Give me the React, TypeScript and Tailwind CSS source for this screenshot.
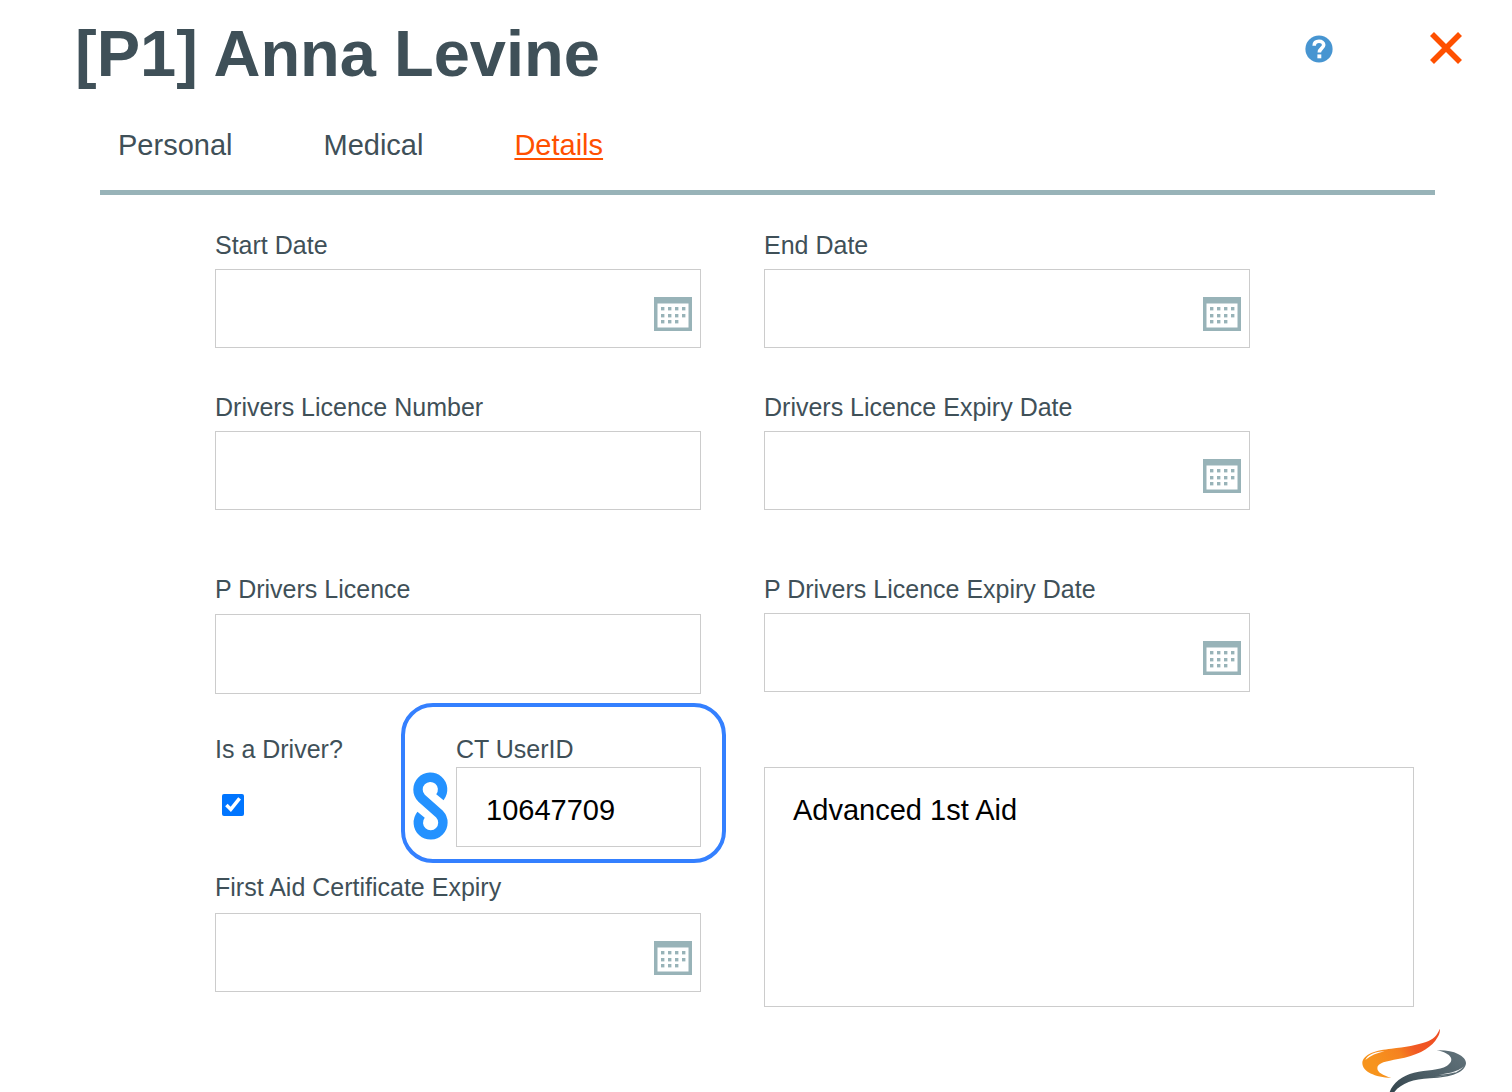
import React from "react";

function CalendarIcon() {
  const dots: [number, number][] = [];
  [10, 17, 23].forEach((y, row) => {
    [7, 14, 21, 28].forEach((x, col) => {
      if (!(row === 2 && col === 3)) dots.push([x, y]);
    });
  });
  return (
    <svg width="38" height="34" viewBox="0 0 38 34" aria-hidden="true">
      <rect width="38" height="34" fill="#98b3b8" />
      <rect x="3.5" y="6.5" width="31" height="24" fill="#fff" />
      {dots.map(([x, y]) => (
        <rect key={`${x}-${y}`} x={x} y={y} width="3.4" height="3.4" fill="#98b3b8" />
      ))}
    </svg>
  );
}

function HelpIcon() {
  return (
    <svg width="28" height="28" viewBox="0 0 28 28" aria-hidden="true">
      <circle cx="14" cy="14" r="13.6" fill="#4795d1" />
      <path
        d="M9.2 10.8C9.2 7.8 11.2 6.3 14 6.3C16.8 6.3 18.7 7.8 18.7 10.1C18.7 13 14.3 13.4 14.3 17.6"
        fill="none"
        stroke="#fff"
        strokeWidth="3.6"
      />
      <rect x="12.4" y="19.4" width="3.9" height="3.9" fill="#fff" />
    </svg>
  );
}

function LinkMark() {
  return (
    <svg width="35" height="68" viewBox="0 0 35 68" className="shrink-0" aria-hidden="true">
      <path
        d="M26.9 25.2A12.3 12.3 0 1 0 8.4 26L26.6 42.2A12.3 12.3 0 1 1 8.1 42.8"
        fill="none"
        stroke="#2492ff"
        strokeWidth="9.4"
      />
    </svg>
  );
}

function BrandMark() {
  return (
    <svg width="104" height="64" viewBox="36 54 312 192" role="img" aria-label="Brand">
      <defs>
        <linearGradient id="flame" x1="0" x2="1" y1="0.6" y2="0.2">
          <stop offset="0.1" stopColor="#f7941d" />
          <stop offset="0.45" stopColor="#f58220" />
          <stop offset="0.65" stopColor="#f15a24" />
          <stop offset="1" stopColor="#ef4d23" />
        </linearGradient>
        <linearGradient id="slate" x1="0" x2="1" y1="0.9" y2="0.2">
          <stop offset="0" stopColor="#36474f" />
          <stop offset="0.5" stopColor="#4d5f67" />
          <stop offset="1" stopColor="#5f7078" />
        </linearGradient>
      </defs>
      <path
        d="M269 56C262 76 250 88 228 96C203 105 165 112 124 116C80 120 37 132 37 160C38 185 74 202 124 204C98 195 82 188 82 174C82 158 110 154 144 147C200 137 235 118 256 92C268 76 271 66 269 56Z"
        fill="url(#flame)"
      />
      <path d="M46 150C54 134 74 125 104 124C80 129 62 137 46 150Z" fill="#fff" />
      <path
        d="M260 121C285 120 308 123 324 132C340 140 348 149 348 160C346 186 305 203 240 205C190 207 155 220 133 246L119 246C128 219 157 196 192 188C230 180 268 181 290 168C316 152 306 130 260 121Z"
        fill="url(#slate)"
      />
      <path d="M254 200C300 198 330 186 345 166C333 180 304 191 266 194C290 193 312 190 324 184C312 192 286 198 254 200Z" fill="#fff" />
    </svg>
  );
}

type FieldProps = {
  id: string;
  label: string;
  date?: boolean;
  value?: string;
  gap?: string;
  height?: string;
};

function Field({ id, label, date, value, gap = "gap-[9px]", height = "h-[79px]" }: FieldProps) {
  return (
    <div className={`flex w-full flex-col ${gap}`}>
      <label htmlFor={id} className="text-[25px] leading-[30px] whitespace-nowrap">
        {label}
      </label>
      <div className="relative">
        <input
          id={id}
          type="text"
          defaultValue={value}
          className={`block ${height} w-full border border-[#cccccc] bg-white px-[29px] pt-[6px] text-[29px] text-black outline-none`}
        />
        {date && (
          <button
            type="button"
            aria-label={`Choose ${label}`}
            className="absolute top-7 right-[9px] cursor-pointer"
          >
            <CalendarIcon />
          </button>
        )}
      </div>
    </div>
  );
}

export default function App() {
  return (
    <div className="bg-white font-['Liberation_Sans',Arial,sans-serif] text-[#3f5058]">
      <header className="flex items-start justify-between pt-4 pr-[50px] pl-[75px]">
        <h1 className="pt-px text-[65px] leading-[74px] font-bold">[P1] Anna Levine</h1>
        <div className="flex items-center gap-[97px] pt-4">
          <button type="button" aria-label="Help" className="cursor-pointer pt-[2px]">
            <HelpIcon />
          </button>
          <button type="button" aria-label="Close" className="cursor-pointer">
            <svg width="32" height="32" viewBox="0 0 32 32" aria-hidden="true">
              <path d="M2 2L30 30M30 2L2 30" stroke="#ff5000" strokeWidth="5.6" />
            </svg>
          </button>
        </div>
      </header>

      <nav className="mr-[77px] ml-[100px] flex gap-[91px] border-b-[5px] border-[#98b3b8] pt-[37px] pb-7 pl-[18px] text-[29px] leading-[34px]">
        <a href="#personal">Personal</a>
        <a href="#medical">Medical</a>
        <a
          href="#details"
          aria-current="page"
          className="text-[#ff5000] underline decoration-2 underline-offset-3"
        >
          Details
        </a>
      </nav>

      <form className="grid grid-cols-[486fr_650fr] gap-[63px] pt-[35px] pr-[98px] pl-[215px]">
        <div className="flex flex-col">
          <Field id="start" label="Start Date" date />
          <div className="mt-11">
            <Field id="licence" label="Drivers Licence Number" />
          </div>
          <div className="mt-16">
            <Field id="plicence" label="P Drivers Licence" gap="gap-[10px]" height="h-20" />
          </div>
          <div className="mt-10 flex justify-between">
            <div className="flex flex-col items-start gap-[30px]">
              <label htmlFor="driver" className="text-[25px] leading-[30px]">
                Is a Driver?
              </label>
              <input
                id="driver"
                type="checkbox"
                defaultChecked
                className="ml-[7px] size-[22px] accent-[#0075ff]"
              />
            </div>
            <div className="relative flex w-[288px] items-end gap-2">
              <div className="pb-[7px]">
                <LinkMark />
              </div>
              <Field id="userid" label="CT UserID" value="10647709" gap="gap-[3px]" height="h-20" />
              <div className="pointer-events-none absolute -top-[31px] -right-[25px] -bottom-4 -left-3 rounded-[32px] border-4 border-[#3480ff]" />
            </div>
          </div>
          <div className="mt-[25px]">
            <Field id="firstaid" label="First Aid Certificate Expiry" date gap="gap-[11px]" />
          </div>
        </div>

        <div className="flex flex-col">
          <div className="flex w-3/4 flex-col pr-0.5">
            <Field id="end" label="End Date" date />
            <div className="mt-11">
              <Field id="licence-expiry" label="Drivers Licence Expiry Date" date />
            </div>
            <div className="mt-16">
              <Field id="plicence-expiry" label="P Drivers Licence Expiry Date" date />
            </div>
          </div>
          <textarea
            aria-label="Notes"
            defaultValue="Advanced 1st Aid"
            className="mt-[75px] block h-60 w-full resize-none border border-[#cccccc] px-7 py-[25px] text-[29px] leading-[34px] text-black outline-none"
          />
        </div>
      </form>

      <footer className="flex justify-end pt-[21px] pr-[46px]">
        <BrandMark />
      </footer>
    </div>
  );
}
